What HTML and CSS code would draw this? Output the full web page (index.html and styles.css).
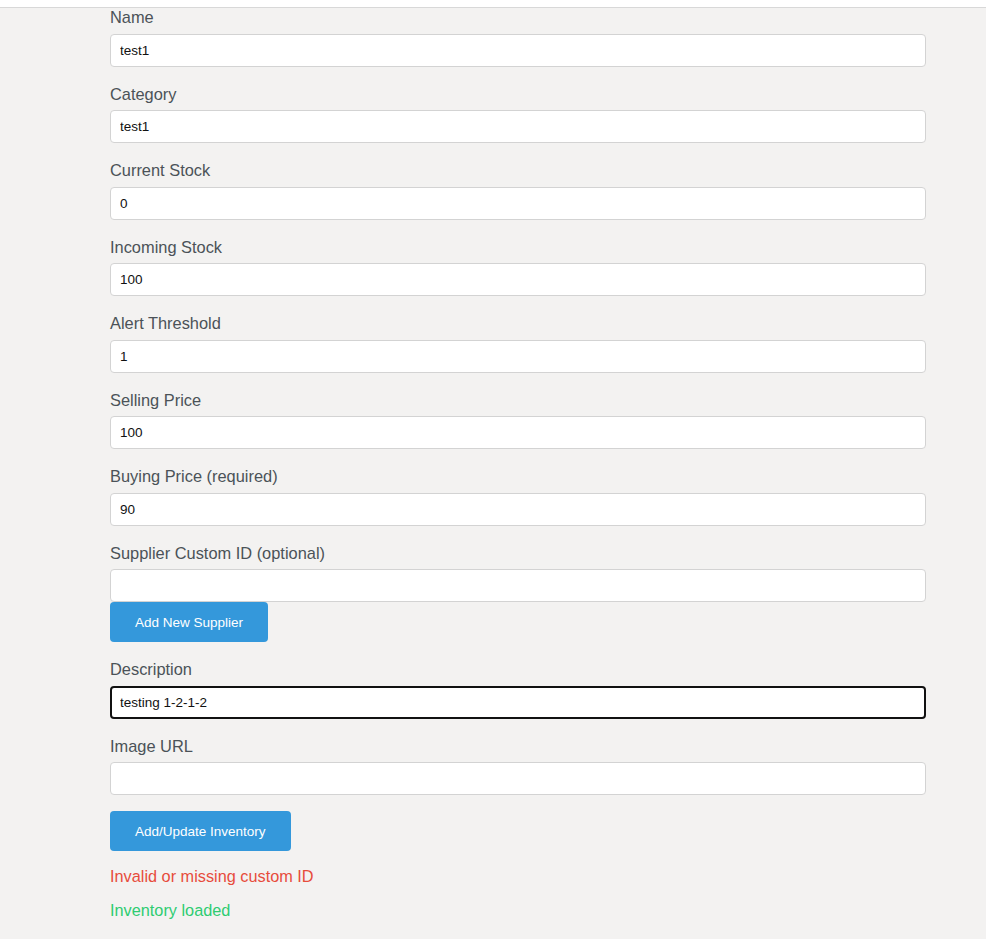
FILE: index.html
```html
<!DOCTYPE html>
<html lang="en">
<head>
<meta charset="UTF-8" />
<meta name="viewport" content="width=device-width, initial-scale=1" />
<title>Inventory</title>
<link rel="stylesheet" href="styles.css">
</head>
<body>
<div class="topbar"></div>
<div class="container">
  <form class="inventory-form">
    <label for="name">Name</label>
    <input type="text" id="name" value="test1">

    <label for="category">Category</label>
    <input type="text" id="category" value="test1">

    <label for="current-stock">Current Stock</label>
    <input type="number" id="current-stock" value="0">

    <label for="incoming-stock">Incoming Stock</label>
    <input type="number" id="incoming-stock" value="100">

    <label for="alert-threshold">Alert Threshold</label>
    <input type="number" id="alert-threshold" value="1">

    <label for="selling-price">Selling Price</label>
    <input type="number" id="selling-price" value="100">

    <label for="buying-price">Buying Price (required)</label>
    <input type="number" id="buying-price" value="90">

    <label for="supplier-id">Supplier Custom ID (optional)</label>
    <input type="text" id="supplier-id" class="no-gap">
    <button type="button" class="btn btn-inline">Add New Supplier</button>

    <label for="description">Description</label>
    <input type="text" id="description" class="focused" value="testing 1-2-1-2">

    <label for="image-url">Image URL</label>
    <input type="text" id="image-url" class="last">

    <button type="submit" class="btn">Add/Update Inventory</button>
  </form>
  <div class="message error">Invalid or missing custom ID</div>
  <div class="message success">Inventory loaded</div>
</div>
</body>
</html>
```

FILE: styles.css
```css
body {
  margin: 0;
  background-color: #f3f2f1;
  font-family: "Liberation Sans", Arial, sans-serif;
  color: #333;
}
.topbar {
  height: 7px;
  background-color: #fff;
  border-bottom: 1px solid #d8d8d8;
}
.container {
  width: 816px;
  margin-left: 110px;
}
.inventory-form {
  display: flex;
  flex-direction: column;
  align-items: flex-start;
}
label {
  font-size: 16.4px;
  line-height: 18px;
  color: #4b5258;
  margin-bottom: 7.5px;
}
input {
  box-sizing: border-box;
  width: 100%;
  height: 33px;
  margin: 0 0 18px 0;
  padding: 0 9px;
  border: 1px solid #d3d3d3;
  border-radius: 4px;
  background-color: #fff;
  font-family: "Liberation Sans", Arial, sans-serif;
  font-size: 13.5px;
  color: #111;
  -moz-appearance: textfield;
}
input::-webkit-outer-spin-button,
input::-webkit-inner-spin-button {
  -webkit-appearance: none;
  margin: 0;
}
input.no-gap {
  margin-bottom: 0;
}
input.last {
  margin-bottom: 16px;
}
input.focused {
  border: 2px solid #111;
  padding: 0 8px;
}
.btn {
  height: 40px;
  padding: 0 25px;
  margin-bottom: 16px;
  border: none;
  border-radius: 4px;
  background-color: #3498db;
  color: #fff;
  font-family: "Liberation Sans", Arial, sans-serif;
  font-size: 13.5px;
  cursor: pointer;
}
.btn-inline {
  margin-bottom: 18px;
}
.message {
  font-size: 16.3px;
  line-height: 18px;
  margin-bottom: 16px;
}
.error {
  color: #e74c3c;
}
.success {
  color: #2ecc71;
}
```
